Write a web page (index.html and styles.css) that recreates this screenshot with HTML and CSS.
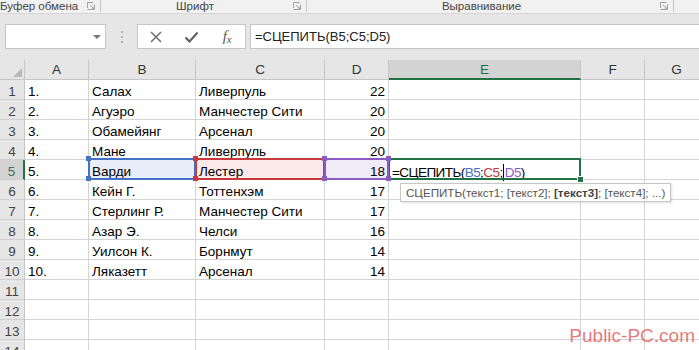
FILE: index.html
```html
<!DOCTYPE html>
<html lang="ru">
  <head>
    <meta charset="UTF-8" />
    <title>СЦЕПИТЬ</title>
    <link rel="stylesheet" href="styles.css">
  </head>
  <body>
    <div class="ribbon">
      <div class="group group-clip">
        <span class="label">Буфер обмена</span>
        <svg class="launcher" width="8" height="8" viewBox="0 0 8 8"><path d="M0.5 6V0.5H6.5M0.5 7.5H7.5V2.5M3 3L7 7M4.5 7H7V4.5" fill="none" stroke="#a3a3a3" /></svg>
      </div>
      <div class="group group-font">
        <span class="label">Шрифт</span>
        <svg class="launcher" width="8" height="8" viewBox="0 0 8 8"><path d="M0.5 6V0.5H6.5M0.5 7.5H7.5V2.5M3 3L7 7M4.5 7H7V4.5" fill="none" stroke="#a3a3a3" /></svg>
      </div>
      <div class="group group-align">
        <span class="label">Выравнивание</span>
        <svg class="launcher" width="8" height="8" viewBox="0 0 8 8"><path d="M0.5 6V0.5H6.5M0.5 7.5H7.5V2.5M3 3L7 7M4.5 7H7V4.5" fill="none" stroke="#a3a3a3" /></svg>
      </div>
    </div>

    <div class="formula-bar">
      <div class="name-box"><span class="arrow"></span></div>
      <div class="dots"><i></i><i></i><i></i></div>
      <div class="fx-buttons">
        <span class="fx-btn">
          <svg width="12" height="12" viewBox="0 0 12 12"><path d="M1 1L11 11M11 1L1 11" stroke="#6e6e6e" stroke-width="1.5" /></svg>
        </span>
        <span class="fx-btn">
          <svg width="15" height="12" viewBox="0 0 15 12"><path d="M1.5 6.5L5.5 10.5L13.5 1.5" fill="none" stroke="#616161" stroke-width="2.2" /></svg>
        </span>
        <span class="fx-btn fx-label"><em>f</em><em class="x">x</em></span>
      </div>
      <div class="formula-input">=СЦЕПИТЬ(B5;C5;D5)</div>
    </div>

    <div class="sheet" id="sheet"></div>

    <div class="watermark">Public-PC.com</div>

    <script>
      const columns = ["A", "B", "C", "D", "E", "F", "G"];

      const players = [
        ["1.", "Салах", "Ливерпуль", 22],
        ["2.", "Агуэро", "Манчестер Сити", 20],
        ["3.", "Обамейянг", "Арсенал", 20],
        ["4.", "Мане", "Ливерпуль", 20],
        ["5.", "Варди", "Лестер", 18],
        ["6.", "Кейн Г.", "Тоттенхэм", 17],
        ["7.", "Стерлинг Р.", "Манчестер Сити", 17],
        ["8.", "Азар Э.", "Челси", 16],
        ["9.", "Уилсон К.", "Борнмут", 14],
        ["10.", "Ляказетт", "Арсенал", 14],
      ];

      const editCell = `
        <div class="cell edit">
          <span class="typed">=СЦЕПИТЬ(<span class="r-b">B5</span>;<span class="r-c">C5</span>;<span class="caret"></span><span class="r-d">D5</span>)</span>
          <div class="tooltip">СЦЕПИТЬ(текст1; [текст2]; <b>[текст3]</b>; [текст4]; ...)</div>
        </div>`;

      function renderSheet() {
        let html = `<div class="corner"></div>`;
        html += columns
          .map((col) => `<div class="col-head${col === "E" ? " active" : ""}">${col}</div>`)
          .join("");

        for (let r = 1; r <= 14; r++) {
          const row = players[r - 1] || ["", "", "", ""];
          const isEdit = r === 5;
          html += `<div class="row-head${isEdit ? " active" : ""}">${r}</div>`;
          html += `<div class="cell">${row[0]}</div>`;
          html += `<div class="cell${isEdit ? " ref ref-b" : ""}">${row[1]}</div>`;
          html += `<div class="cell${isEdit ? " ref ref-c" : ""}">${row[2]}</div>`;
          html += `<div class="cell num${isEdit ? " ref ref-d" : ""}">${row[3]}</div>`;
          html += isEdit ? editCell : `<div class="cell"></div>`;
          html += `<div class="cell"></div><div class="cell"></div>`;
        }

        document.getElementById("sheet").innerHTML = html;
      }

      renderSheet();
    </script>
  </body>
</html>
```

FILE: styles.css
```css
* {
  box-sizing: border-box;
}
body {
  margin: 0;
  width: 699px;
  height: 350px;
  overflow: hidden;
  position: relative;
  background: #fff;
  font-family: "Liberation Sans", Arial, sans-serif;
  color: #000;
}

/* ribbon group captions */
.ribbon {
  display: flex;
  height: 14px;
  background: #f1f1f1;
  border-bottom: 1px solid #d6d6d6;
  font-size: 11.5px;
  line-height: 12px;
  color: #444;
}
.group {
  display: flex;
  align-items: center;
  height: 12px;
  border-right: 1px solid #c8c8c8;
}
.group .label {
  flex: 1;
  text-align: center;
  white-space: nowrap;
}
.group .launcher {
  margin: 0 5px 0 4px;
}
.group-clip {
  width: 101px;
}
.group-clip .label {
  text-align: left;
}
.group-font {
  width: 206px;
}
.group-align {
  width: 367px;
}

/* formula bar */
.formula-bar {
  display: flex;
  align-items: flex-start;
  height: 46px;
  padding: 10px 0 0 5px;
  background: #e6e6e6;
}
.name-box {
  display: flex;
  align-items: center;
  justify-content: flex-end;
  width: 101px;
  height: 25px;
  padding-right: 4px;
  background: #fff;
  border: 1px solid #c6c6c6;
}
.arrow {
  width: 0;
  height: 0;
  border-left: 4px solid transparent;
  border-right: 4px solid transparent;
  border-top: 4px solid #777;
}
.dots {
  display: flex;
  flex-direction: column;
  align-items: center;
  justify-content: center;
  gap: 3px;
  width: 31px;
  height: 25px;
}
.dots i {
  width: 2px;
  height: 2px;
  background: #b3b3b3;
}
.fx-buttons {
  display: flex;
  width: 109px;
  height: 25px;
  background: #fff;
  border: 1px solid #c6c6c6;
}
.fx-btn {
  display: flex;
  align-items: center;
  justify-content: center;
  width: 36px;
}
.fx-label {
  font-family: "Liberation Serif", serif;
  font-size: 15px;
  color: #555;
}
.fx-label .x {
  font-size: 11px;
  margin-top: 4px;
}
.formula-input {
  flex: 1;
  height: 25px;
  margin-left: 4px;
  padding-left: 4px;
  background: #fff;
  border: 1px solid #c6c6c6;
  border-right: none;
  font-size: 13px;
  line-height: 23px;
  color: #222;
}

/* sheet grid */
.sheet {
  display: grid;
  grid-template-columns: 25px 64px 107px 129px 64px 192px 64px 64px;
  grid-template-rows: 20px repeat(14, 20px);
  font-size: 13.5px;
}
.corner,
.col-head,
.row-head {
  background: #e6e6e6;
  border-right: 1px solid #c6c6c6;
  border-bottom: 1px solid #c6c6c6;
  color: #333;
}
.corner {
  position: relative;
}
.corner::after {
  content: "";
  position: absolute;
  right: 2px;
  bottom: 2px;
  border-left: 9px solid transparent;
  border-bottom: 9px solid #b9b9b9;
}
.col-head {
  text-align: center;
  line-height: 19px;
}
.col-head.active {
  background: #d3d3d3;
  border-bottom: 2px solid #217346;
  color: #217346;
}
.row-head {
  text-align: center;
  border-bottom-color: #cfcfcf;
  padding-top: 4px;
  line-height: 15px;
  color: #444;
}
.row-head.active {
  background: #d3d3d3;
  border-right: 2px solid #217346;
  color: #4d6b58;
}
.cell {
  position: relative;
  padding: 4px 3px 0;
  line-height: 15px;
  white-space: nowrap;
  border-right: 1px solid #d4d4d4;
  border-bottom: 1px solid #d4d4d4;
}
.cell.num {
  text-align: right;
}

/* range references of the formula being typed */
.ref-b {
  --c: #4472c4;
  background: #e8eef9;
}
.ref-c {
  --c: #c8383c;
  background: #fbe8e8;
}
.ref-d {
  --c: #8a5cc2;
  background: #efebf7;
  z-index: 2;
}
.ref::after {
  content: "";
  position: absolute;
  left: -1px;
  top: -2px;
  right: -1px;
  bottom: -1px;
  border: 2px solid var(--c);
  pointer-events: none;
}
.ref::before {
  content: "";
  position: absolute;
  left: -3px;
  top: -4px;
  width: 5px;
  height: 5px;
  background: var(--c);
  box-shadow: 0 20px 0 var(--c);
  z-index: 1;
}
.ref-d::before {
  box-shadow: 0 20px 0 var(--c), 64px 0 0 var(--c), 64px 20px 0 var(--c);
}
.cell.edit {
  z-index: 1;
}
.cell.edit::after {
  content: "";
  position: absolute;
  left: -1px;
  top: -2px;
  right: -1px;
  bottom: -1px;
  border: 2px solid #217346;
}
.cell.edit::before {
  content: "";
  position: absolute;
  right: -4px;
  bottom: -4px;
  width: 5px;
  height: 5px;
  background: #217346;
  border: 1px solid #fff;
  z-index: 1;
}
.typed {
  letter-spacing: -0.55px;
}
.r-b {
  color: #4472c4;
}
.r-c {
  color: #c8383c;
}
.r-d {
  color: #8a5cc2;
}
.caret {
  display: inline-block;
  width: 0;
  height: 17px;
  margin: 0 1px 0 0;
  vertical-align: -4px;
  border-left: 1px solid #000;
}
.tooltip {
  position: absolute;
  left: 11px;
  top: 23px;
  z-index: 3;
  width: 271px;
  height: 19px;
  padding: 0 5px;
  background: #fff;
  border: 1px solid #c6c6c6;
  box-shadow: 1px 1px 2px rgba(0, 0, 0, 0.12);
  font-size: 11.6px;
  line-height: 17px;
  letter-spacing: 0;
  color: #555;
}
.tooltip b {
  color: #444;
}

.watermark {
  position: absolute;
  right: 4px;
  bottom: 3px;
  font-size: 19px;
  color: rgba(228, 84, 84, 0.78);
}
```
